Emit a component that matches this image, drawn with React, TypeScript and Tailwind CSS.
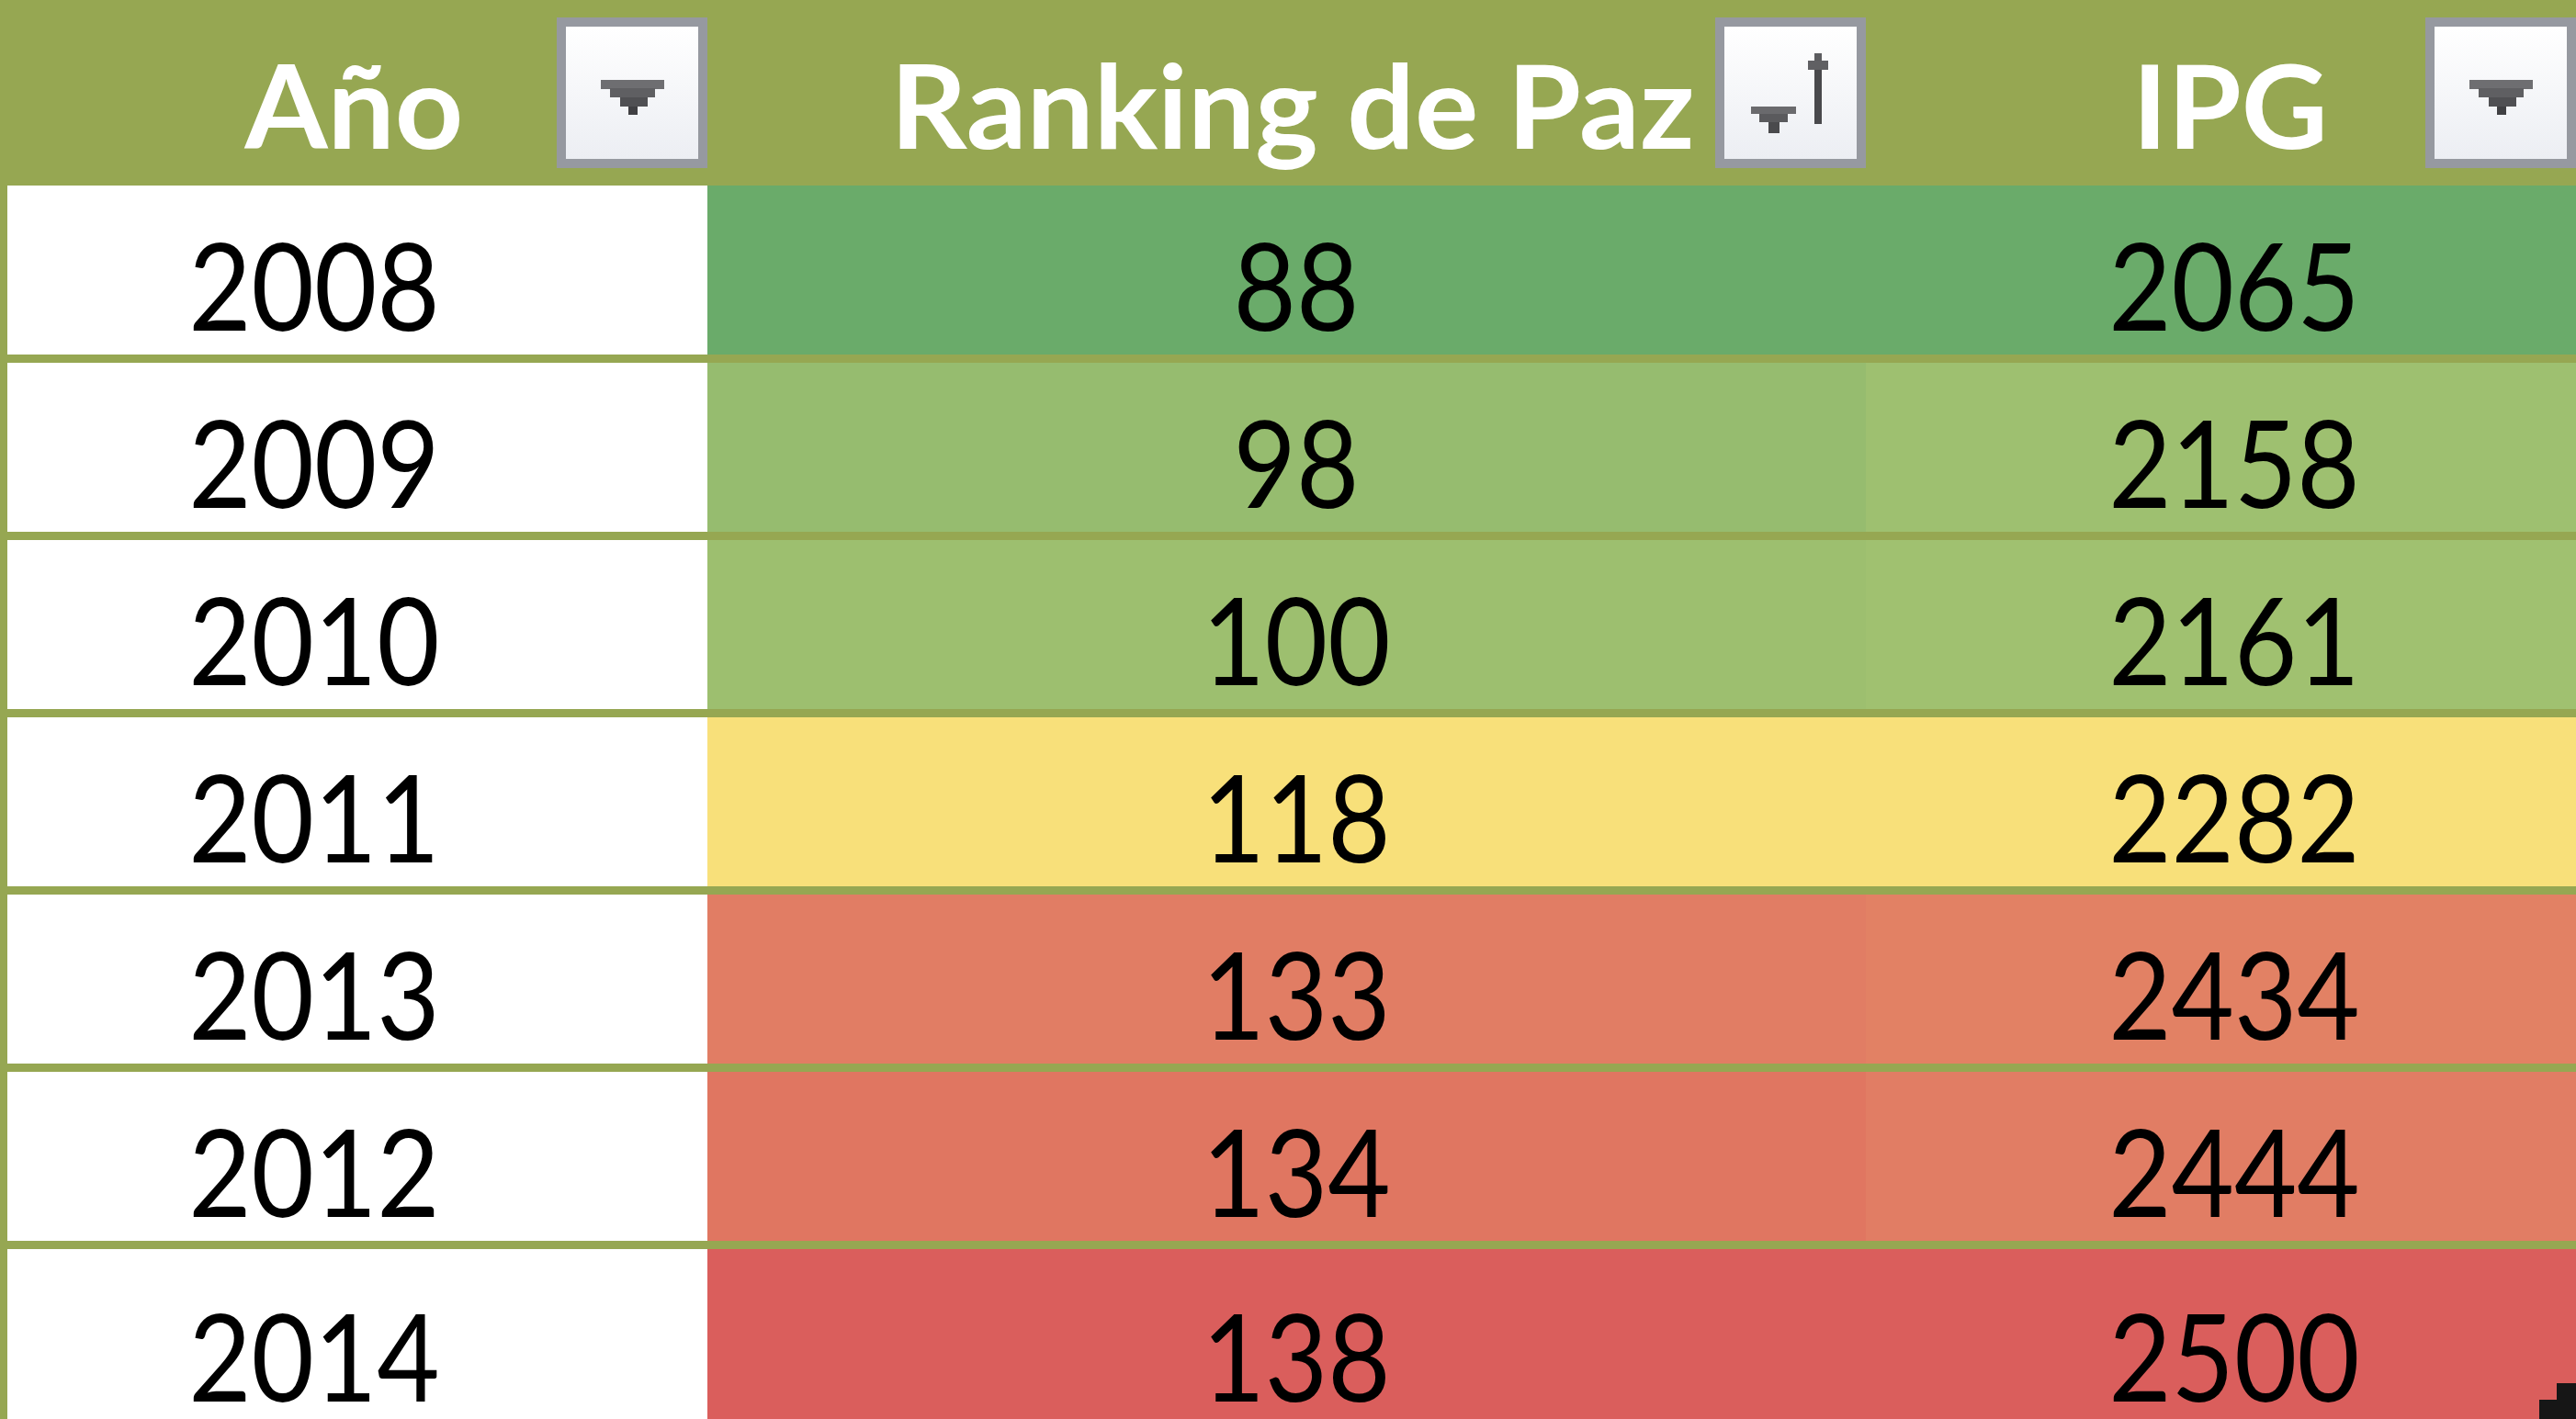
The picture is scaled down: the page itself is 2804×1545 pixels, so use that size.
type Row = {
  year: number
  rank: number
  ipg: number
  rankBg: string
  ipgBg: string
}

const rows: Row[] = [
  { year: 2008, rank: 88, ipg: 2065, rankBg: 'bg-[#6aab6a]', ipgBg: 'bg-[#6aab6a]' },
  { year: 2009, rank: 98, ipg: 2158, rankBg: 'bg-[#96bc6f]', ipgBg: 'bg-[#9ec070]' },
  { year: 2010, rank: 100, ipg: 2161, rankBg: 'bg-[#9dbf6f]', ipgBg: 'bg-[#a0c170]' },
  { year: 2011, rank: 118, ipg: 2282, rankBg: 'bg-[#f8e07a]', ipgBg: 'bg-[#f8e07a]' },
  { year: 2013, rank: 133, ipg: 2434, rankBg: 'bg-[#e17d64]', ipgBg: 'bg-[#e28164]' },
  { year: 2012, rank: 134, ipg: 2444, rankBg: 'bg-[#e07661]', ipgBg: 'bg-[#e17d64]' },
  { year: 2014, rank: 138, ipg: 2500, rankBg: 'bg-[#da5e5c]', ipgBg: 'bg-[#da5e5c]' },
]

function FilterIcon() {
  return (
    <svg width="144" height="144" viewBox="0 0 144 144">
      <rect x="38" y="58" width="69" height="10" fill="#6e6e71" />
      <rect x="48" y="67" width="49" height="10" fill="#5f5f62" />
      <rect x="59" y="77" width="30" height="10" fill="#505053" />
      <rect x="68" y="87" width="10" height="9" fill="#404043" />
    </svg>
  )
}

function SortIcon() {
  return (
    <svg width="144" height="144" viewBox="0 0 144 144">
      <rect x="29" y="87" width="49" height="8" fill="#6a6a6d" />
      <rect x="38" y="95" width="31" height="9" fill="#5a5a5d" />
      <rect x="48" y="104" width="12" height="12" fill="#4a4a4d" />
      <rect x="98" y="29" width="8" height="8" fill="#5c5c5f" />
      <rect x="91" y="37" width="22" height="10" fill="#606063" />
      <rect x="98" y="47" width="8" height="59" fill="#49494c" />
    </svg>
  )
}

function HeaderButton({ sort }: { sort?: boolean }) {
  return (
    <div className="absolute right-0 top-[19px] h-[164px] w-[164px] border-[10px] border-[#9699a0]">
      <div className="h-full w-full bg-linear-to-b from-white to-[#eceef3]">
        {sort ? <SortIcon /> : <FilterIcon />}
      </div>
    </div>
  )
}

function HeaderCell({ label, sort, shift }: { label: string; sort?: boolean; shift: string }) {
  return (
    <div className={`relative flex h-full items-center justify-center pt-[26px] ${shift}`}>
      <span className="inline-block scale-x-[1.03] text-[126px] font-bold leading-none text-white">
        {label}
      </span>
      <HeaderButton sort={sort} />
    </div>
  )
}

function Num({ value }: { value: number }) {
  return <span className="inline-block scale-x-[0.9] text-[131px] leading-none text-black">{value}</span>
}

export default function App() {
  return (
    <div className="relative h-[1545px] w-[2804px] overflow-hidden bg-[#96a752] font-['Lato',sans-serif]">
      <div className="grid h-[202px] grid-cols-[770px_1261px_773px]">
        <HeaderCell label="Año" shift="" />
        <HeaderCell label="Ranking de Paz" sort shift="pl-[12px]" />
        <HeaderCell label="IPG" shift="pl-[19px]" />
      </div>

      <div className="flex flex-col gap-[9px] pl-[8px]">
        {rows.map((r, i) => (
          <div
            key={r.year}
            className={`grid grid-cols-[762px_1261px_773px] ${i === rows.length - 1 ? 'h-[200px]' : 'h-[184px]'}`}
          >
            <div className="flex items-center justify-center bg-white pr-[94px] pt-[30px]">
              <Num value={r.year} />
            </div>
            <div className={`flex items-center justify-center pl-[20px] pt-[30px] ${r.rankBg}`}>
              <Num value={r.rank} />
            </div>
            <div className={`flex items-center justify-center pl-[28px] pt-[30px] ${r.ipgBg}`}>
              <Num value={r.ipg} />
            </div>
          </div>
        ))}
      </div>

      {/* table resize handle */}
      <svg className="absolute bottom-0 right-0" width="40" height="39" viewBox="0 0 40 39">
        <rect x="19" y="0" width="21" height="39" fill="#161616" />
        <rect x="0" y="18" width="40" height="21" fill="#161616" />
      </svg>
    </div>
  )
}
